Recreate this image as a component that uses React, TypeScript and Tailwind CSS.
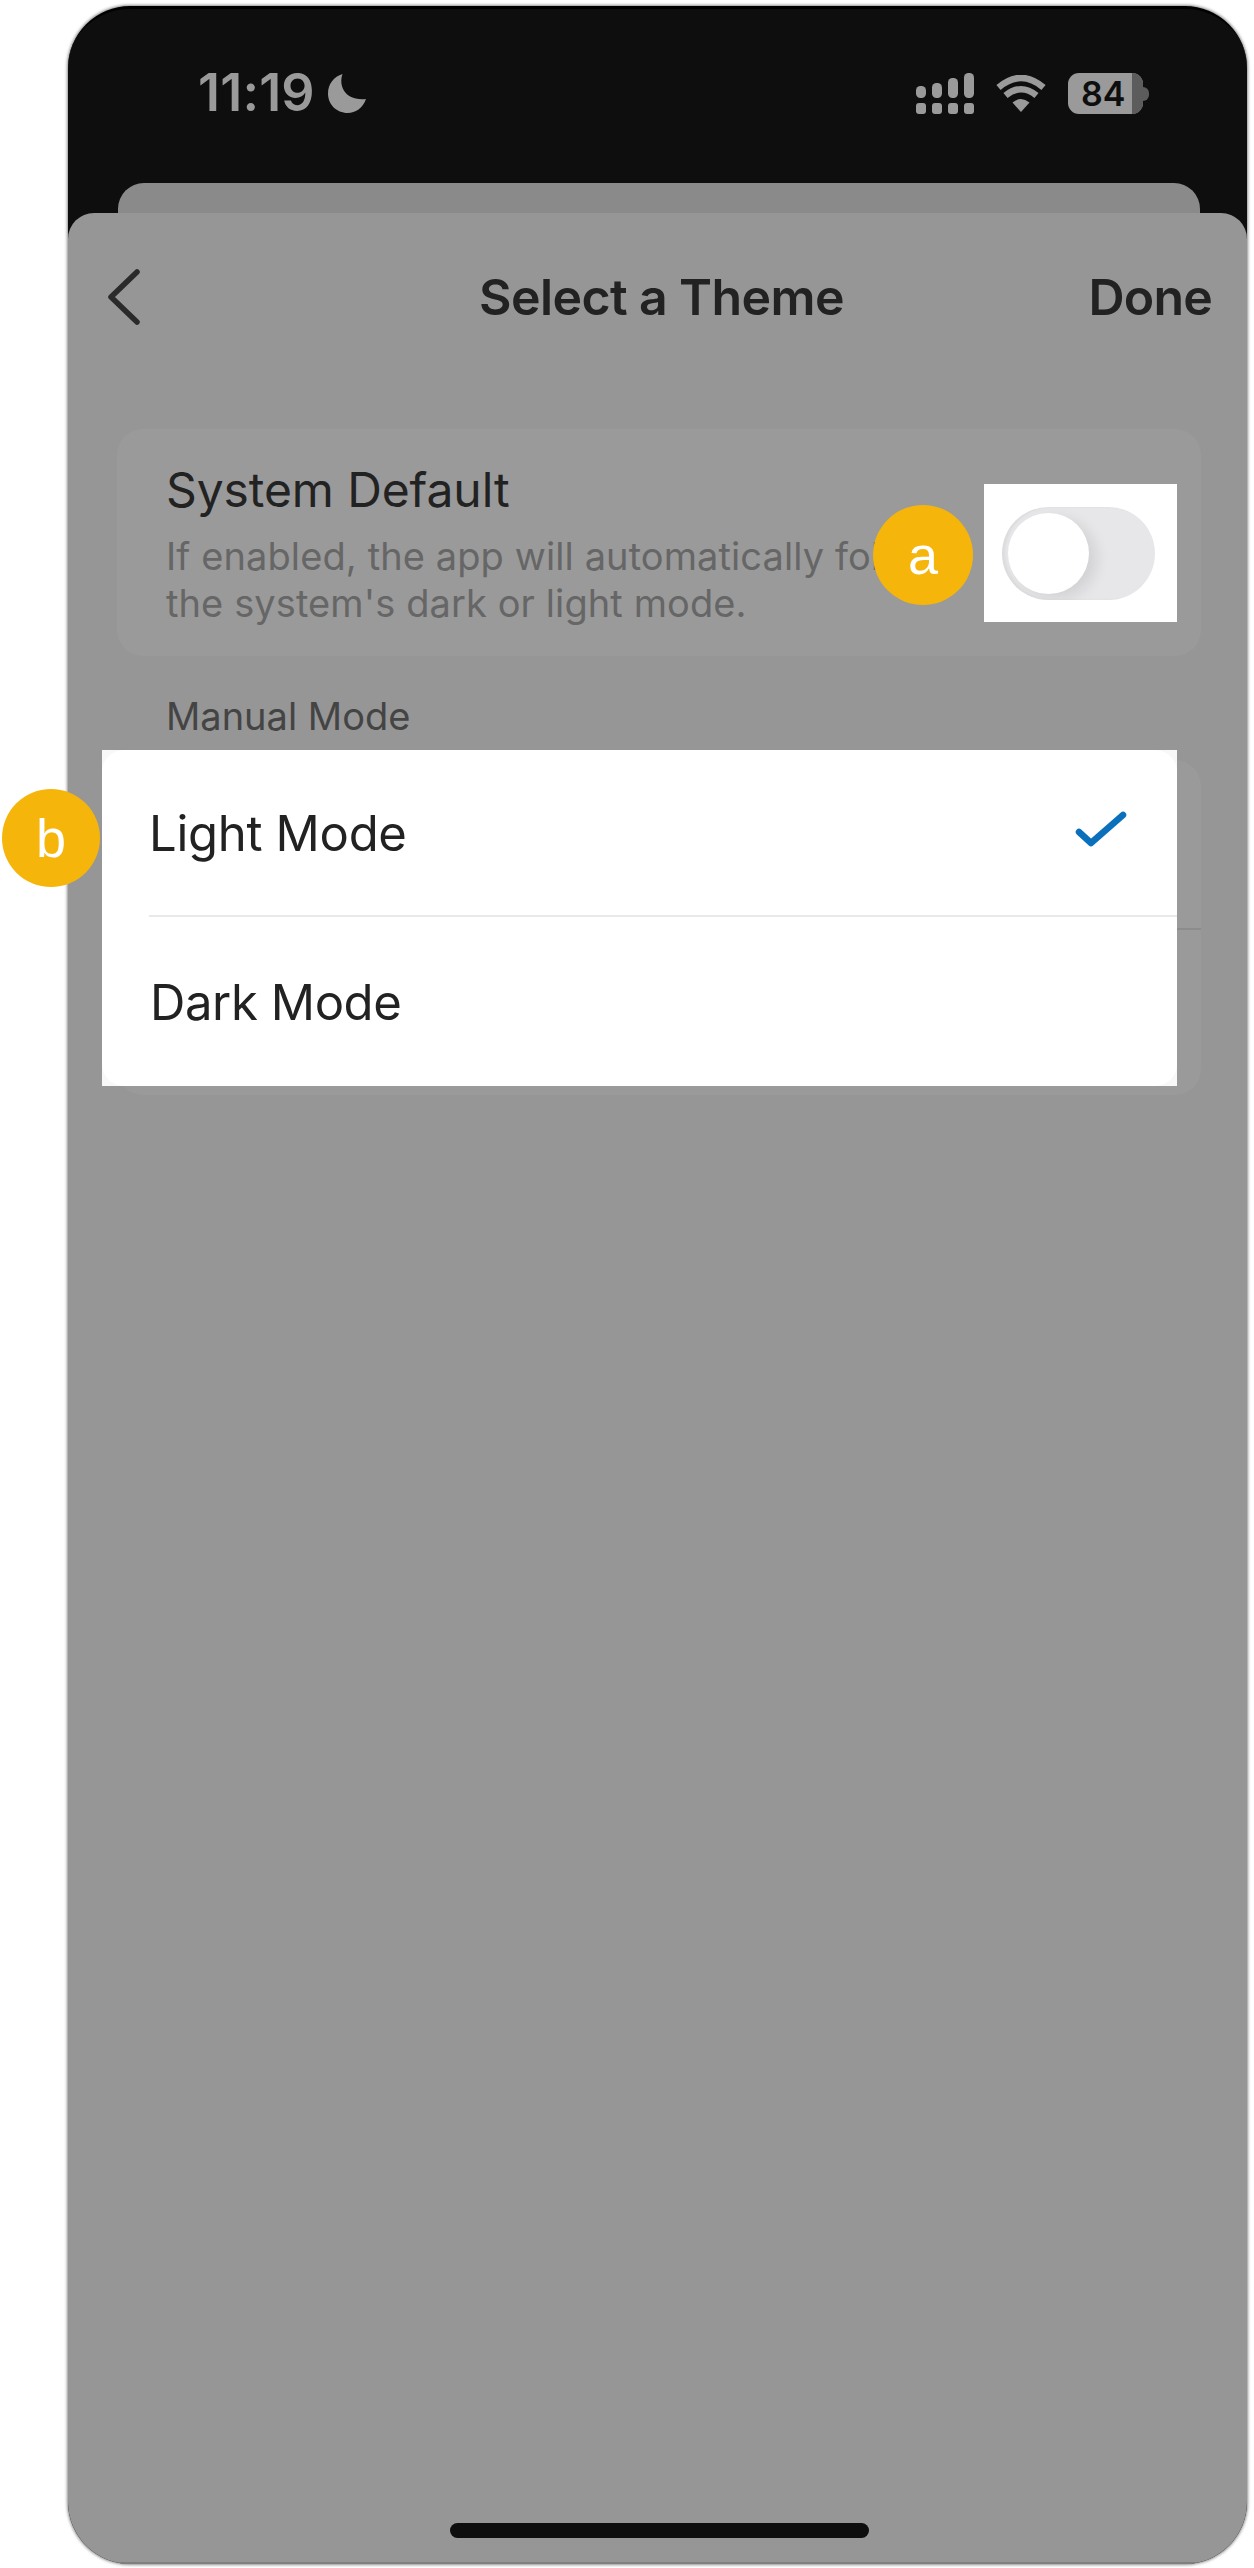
import React from "react";

const font = { fontFamily: "Inter, 'Noto Sans', sans-serif" };

function Signal() {
  const tops = [86, 83, 78, 73];
  return (
    <svg width="58" height="41" viewBox="0 0 58 41" fill="#9a9a9a">
      {tops.map((t, i) => (
        <g key={i}>
          <rect x={i * 16} y={t - 73} width="10" height={98 - t} rx="4.5" />
          <rect x={i * 16} y="30" width="10" height="11" rx="3" />
        </g>
      ))}
    </svg>
  );
}

function Wifi() {
  return (
    <svg width="50" height="37" viewBox="0 0 50 37" fill="none">
      <path d="M25 37 L16.5 27.5 Q25 20.5 33.5 27.5 Z" fill="#9a9a9a" />
      <path d="M9.5 20.5 Q25 8 40.5 20.5" stroke="#9a9a9a" strokeWidth="6.5" />
      <path d="M2.5 12.5 Q25 -6.5 47.5 12.5" stroke="#9a9a9a" strokeWidth="6.5" />
    </svg>
  );
}

function Moon() {
  return (
    <svg width="38" height="39" viewBox="0 0 38 39" fill="#9a9a9a">
      <path d="M14.5 0 C10.5 11 16 27 38 25 C35 34 27 39 20 39 C8 39 0 30 0 19.5 C0 10 6 2.5 14.5 0 Z" />
    </svg>
  );
}

export default function App() {
  return (
    <div className="relative w-[1254px] h-[2568px] bg-white overflow-hidden" style={font}>
      <div className="ml-[68px] pt-[6px] h-[2564px] w-[1179px]">
        <div className="h-full rounded-[62px] bg-[#0e0e0e] overflow-hidden flex flex-col shadow-[0_0_3px_1px_rgba(0,0,0,0.45)] border-t-[3px] border-black">
          {/* status bar */}
          <div className="h-[174px] shrink-0 flex items-start justify-between pl-[130px] pr-[98px] pt-[64px]">
            <div className="flex items-center gap-[13px] h-[40px]">
              <span className="text-[52px] leading-[40px] font-semibold tracking-[0.2px] text-[#9a9a9a]">11:19</span>
              <Moon />
            </div>
            <div className="flex items-center h-[41px]">
              <Signal />
              <div className="ml-[22px]"><Wifi /></div>
              <div className="ml-[22px] relative w-[75px] h-[41px] rounded-[11px] bg-[#9a9a9a] overflow-hidden flex items-center pl-[13px]">
                <span className="text-[34px] leading-[41px] font-semibold text-[#0e0e0e]">84</span>
                <div className="absolute right-0 top-0 bottom-0 w-[11px] bg-[#5c5c5c]" />
              </div>
              <div className="w-[6px] h-[14px] rounded-r-full bg-[#5c5c5c]" />
            </div>
          </div>
          {/* card behind the sheet */}
          <div className="h-[30px] shrink-0 ml-[50px] mr-[47px] rounded-t-[26px] bg-[#8a8a8a]" />
          {/* sheet */}
          <div className="flex-1 rounded-t-[26px] bg-[#969696] flex flex-col relative shadow-[inset_0_-2px_0_#7f7f7f]">
            <div className="grid grid-cols-[1fr_auto_1fr] items-center h-[60px] mt-[54px] pl-[40px] pr-[35px]">
              <svg width="32" height="56" viewBox="0 0 32 56" fill="none">
                <path d="M29 3 L3 28 L29 53" stroke="#2a2a2a" strokeWidth="5.5" strokeLinecap="round" strokeLinejoin="round" />
              </svg>
              <span className="text-[50px] leading-[60px] font-semibold text-[#222] tracking-[-0.6px] ml-[3px]">Select a Theme</span>
              <span className="text-[50px] leading-[60px] font-semibold text-[#222] justify-self-end tracking-[-0.8px]">Done</span>
            </div>

            <div className="mt-[102px] ml-[49px] mr-[46px] h-[227px] rounded-[26px] bg-[#9a9a9a] pl-[49px] pt-[33px]">
              <div className="text-[48px] leading-[56px] text-[#222] tracking-[-0.1px]">System Default</div>
              <div className="text-[38px] leading-[47px] text-[#666] tracking-[0.1px] mt-[15px]">
                <div>If enabled, the app will automatically follow</div>
                <div>the system's dark or light mode.</div>
              </div>
            </div>

            <div className="mt-[36px] ml-[98px] text-[38px] leading-[48px] text-[#444]">Manual Mode</div>

            <div className="mt-[20px] ml-[49px] mr-[46px] h-[335px] rounded-[26px] bg-[#9a9a9a] flex flex-col">
              <div className="h-[170px] border-b-2 border-[#8c8c8c]" />
            </div>

            <div className="mt-auto mb-[26px] self-center translate-x-[2px] w-[419px] h-[15px] rounded-full bg-[#0e0e0e]" />
          </div>
        </div>
      </div>

      {/* spotlight: toggle */}
      <div className="absolute left-[984px] top-[484px] w-[193px] h-[138px] bg-white flex items-center justify-center pr-[4px]">
        <div className="w-[153px] h-[93px] rounded-full bg-[#e7e7e9] shadow-[inset_3px_0_3px_rgba(0,0,0,0.05)] pl-[6px] flex items-center overflow-hidden">
          <div className="w-[81px] h-[81px] rounded-full bg-white shadow-[8px_5px_14px_rgba(0,0,0,0.09)]" />
        </div>
      </div>

      {/* spotlight: list */}
      <div className="absolute left-[102px] top-[750px] w-[1075px] h-[336px] bg-[#f8f8f8]">
        <div className="h-full bg-white rounded-[22px] flex flex-col">
          <div className="h-[165px] flex items-center justify-between pl-[47px] pr-[50px]">
            <span className="text-[49px] leading-[60px] text-[#222] tracking-[-0.3px] relative top-[1px]">Light Mode</span>
            <svg width="52" height="40" viewBox="0 0 52 40" fill="none" className="relative -top-[2px]">
              <path d="M4 21 L16 32 L48 4" stroke="#0a70bc" strokeWidth="6.5" strokeLinecap="round" strokeLinejoin="round" />
            </svg>
          </div>
          <div className="h-[2px] ml-[47px] bg-[#e9e9eb]" />
          <div className="flex-1 flex items-center pl-[48px]">
            <span className="text-[49px] leading-[60px] text-[#222] tracking-[-0.4px] relative top-[1px]">Dark Mode</span>
          </div>
        </div>
      </div>

      {/* badges */}
      <div className="absolute left-[873px] top-[505px] w-[100px] h-[100px] rounded-full bg-[#f5b50a] flex items-center justify-center text-white text-[54px] leading-none" style={{ fontFamily: "'Liberation Sans', sans-serif" }}>a</div>
      <div className="absolute left-[2px] top-[789px] w-[98px] h-[98px] rounded-full bg-[#f5b50a] flex items-center justify-center text-white text-[54px] leading-none" style={{ fontFamily: "'Liberation Sans', sans-serif" }}>b</div>
    </div>
  );
}
